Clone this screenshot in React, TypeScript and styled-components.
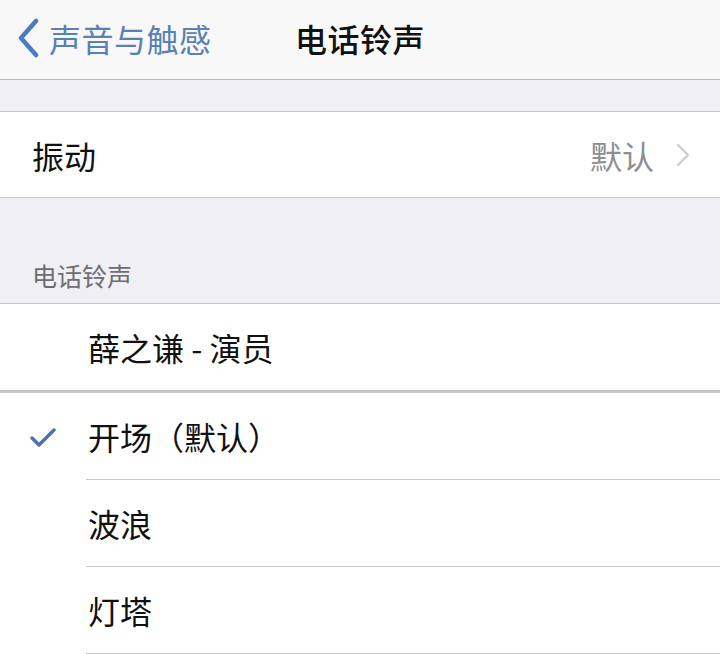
import { FC } from "react";
import styled, { createGlobalStyle } from "styled-components";

const GlobalStyle = createGlobalStyle`
  html, body {
    margin: 0;
    padding: 0;
    background: #efeff4;
  }
  body {
    font-family: "Noto Sans CJK SC", "Noto Sans", sans-serif;
    -webkit-font-smoothing: antialiased;
  }
`;

interface Ringtone {
  id: string;
  name: string;
  checked?: boolean;
}

const custom: Ringtone[] = [{ id: "yanyuan", name: "薛之谦 - 演员" }];

const builtin: Ringtone[] = [
  { id: "opening", name: "开场（默认）", checked: true },
  { id: "waves", name: "波浪" },
  { id: "lighthouse", name: "灯塔" },
];

const BackChevron: FC = () => (
  <svg width="24" height="40" viewBox="0 0 24 40">
    <path
      d="M20 3 L5 20 L20 37"
      fill="none"
      stroke="#4a7cc4"
      strokeWidth="4.5"
      strokeLinecap="round"
      strokeLinejoin="round"
    />
  </svg>
);

const DisclosureChevron: FC = () => (
  <svg width="14" height="24" viewBox="0 0 14 24">
    <path
      d="M2 2 L12 12 L2 22"
      fill="none"
      stroke="#cdcdd2"
      strokeWidth="2.4"
      strokeLinecap="round"
      strokeLinejoin="round"
    />
  </svg>
);

const CheckMark: FC = () => (
  <svg width="26" height="20" viewBox="0 0 26 20">
    <path
      d="M2 11 L9 18 L24 3"
      fill="none"
      stroke="#4a72ad"
      strokeWidth="3.4"
      strokeLinecap="round"
      strokeLinejoin="round"
    />
  </svg>
);

const App: FC = () => {
  return (
    <>
      <GlobalStyle />
      <Screen>
        <NavBar>
          <BackButton>
            <BackChevron />
            <BackLabel>声音与触感</BackLabel>
          </BackButton>
          <NavTitle>电话铃声</NavTitle>
          <span />
        </NavBar>

        <Gap />

        <Group>
          <Row>
            <RowLabel>振动</RowLabel>
            <RowValue>
              默认
              <DisclosureChevron />
            </RowValue>
          </Row>
        </Group>

        <SectionHeader>电话铃声</SectionHeader>

        <Group>
          {custom.map((tone) => (
            <ToneRow key={tone.id}>
              <CheckSlot />
              <ToneName>{tone.name}</ToneName>
            </ToneRow>
          ))}
        </Group>

        <ThickRule />

        <Group>
          {builtin.map((tone) => (
            <ToneRow key={tone.id} $height={87}>
              <CheckSlot>{tone.checked && <CheckMark />}</CheckSlot>
              <ToneName $divider>{tone.name}</ToneName>
            </ToneRow>
          ))}
        </Group>
      </Screen>
    </>
  );
};

export default App;

const Screen = styled.div`
  width: 720px;
  height: 654px;
  overflow: hidden;
  background: #efeff4;
  display: flex;
  flex-direction: column;
`;

const NavBar = styled.div`
  height: 80px;
  flex-shrink: 0;
  display: grid;
  grid-template-columns: 1fr auto 1fr;
  align-items: center;
  background: #f8f8f9;
  border-bottom: 1px solid #b8b8bc;
  padding: 0 16px 4px 16px;
  box-sizing: border-box;
`;

const BackButton = styled.div`
  display: flex;
  align-items: center;
  gap: 9px;
`;

const BackLabel = styled.span`
  font-size: 32px;
  color: #5a80b4;
  letter-spacing: 0.5px;
`;

const NavTitle = styled.div`
  font-size: 32px;
  font-weight: 500;
  color: #111;
  letter-spacing: 0.5px;
`;

const Gap = styled.div`
  height: 31px;
  flex-shrink: 0;
  border-bottom: 1px solid #c8c7cc;
`;

const Group = styled.div`
  background: #fff;
  flex-shrink: 0;
`;

const Row = styled.div`
  height: 85px;
  display: flex;
  align-items: center;
  justify-content: space-between;
  padding: 0 30px 0 32px;
  border-bottom: 1px solid #c8c7cc;
`;

const RowLabel = styled.span`
  font-size: 32px;
  color: #111;
`;

const RowValue = styled.span`
  display: flex;
  align-items: center;
  gap: 22px;
  font-size: 32px;
  color: #8e8e93;
`;

const SectionHeader = styled.div`
  height: 106px;
  flex-shrink: 0;
  box-sizing: border-box;
  display: flex;
  align-items: flex-end;
  padding: 0 0 10px 32px;
  font-size: 25px;
  color: #6d6d72;
  border-bottom: 1px solid #c8c7cc;
`;

const ToneRow = styled.div<{ $height?: number }>`
  display: flex;
  height: ${(p) => p.$height ?? 86}px;
`;

const CheckSlot = styled.div`
  width: 86px;
  flex-shrink: 0;
  display: flex;
  align-items: center;
  padding-left: 30px;
  box-sizing: border-box;
`;

const ToneName = styled.div<{ $divider?: boolean }>`
  flex: 1;
  display: flex;
  align-items: center;
  padding-left: 2px;
  font-size: 32px;
  color: #111;
  border-bottom: ${(p) => (p.$divider ? "1px solid #c8c7cc" : "none")};
`;

const ThickRule = styled.div`
  height: 3px;
  flex-shrink: 0;
  background: #c6c6c8;
`;
